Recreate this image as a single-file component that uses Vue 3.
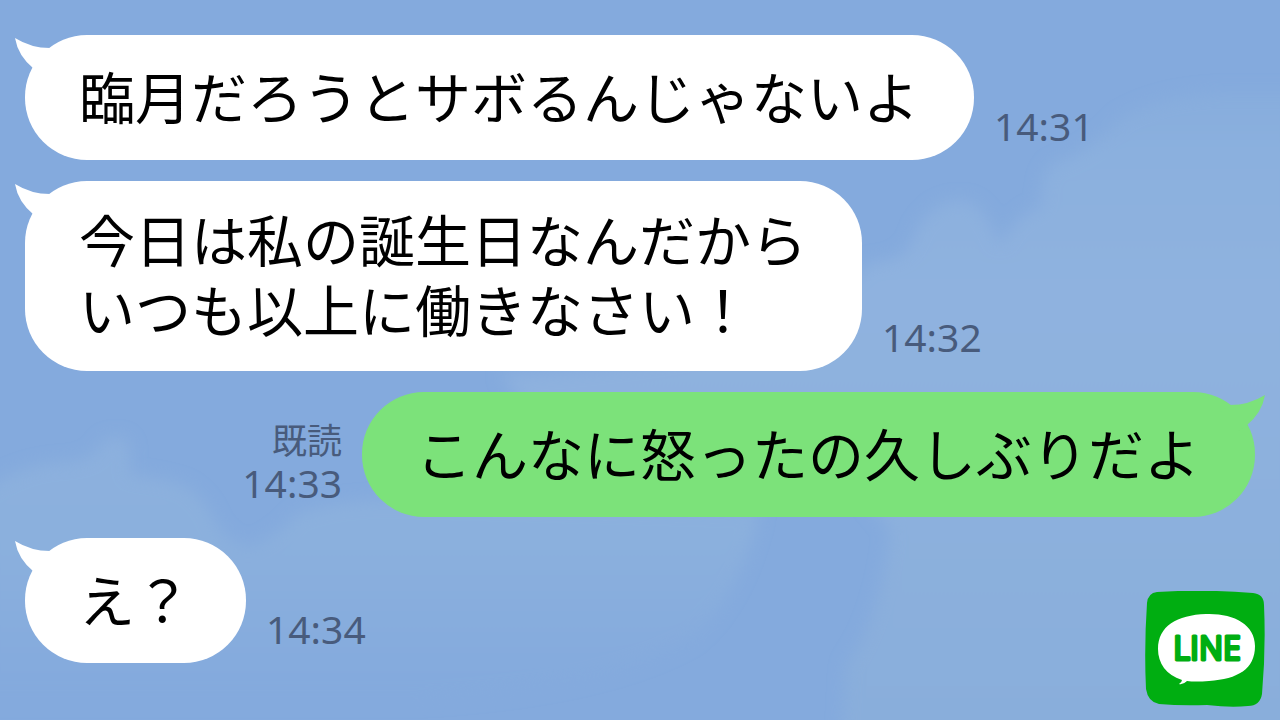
<script setup>
const messages = [
  { id: 1, mine: false, lines: ['臨月だろうとサボるんじゃないよ'], time: '14:31' },
  { id: 2, mine: false, lines: ['今日は私の誕生日なんだから', 'いつも以上に働きなさい！'], time: '14:32' },
  { id: 3, mine: true, lines: ['こんなに怒ったの久しぶりだよ'], time: '14:33', read: '既読' },
  { id: 4, mine: false, lines: ['え？'], time: '14:34' },
]
</script>

<template>
  <main class="chat">
    <svg class="sky" viewBox="0 0 1280 720" preserveAspectRatio="none" aria-hidden="true">
      <defs>
        <filter id="soft" x="-10%" y="-10%" width="120%" height="120%">
          <feGaussianBlur stdDeviation="8" />
        </filter>
        <linearGradient id="fadeLeft" x1="0" y1="440" x2="0" y2="680" gradientUnits="userSpaceOnUse">
          <stop offset="0" stop-color="#8cb0de" />
          <stop offset="0.4" stop-color="#8bb0dd" />
          <stop offset="1" stop-color="#84aadd" />
        </linearGradient>
        <linearGradient id="fadeRight" x1="0" y1="80" x2="0" y2="720" gradientUnits="userSpaceOnUse">
          <stop offset="0" stop-color="#86acdd" />
          <stop offset="0.12" stop-color="#8bb0de" />
          <stop offset="0.35" stop-color="#8fb2df" />
          <stop offset="1" stop-color="#89aedb" />
        </linearGradient>
      </defs>
      <path
        filter="url(#soft)"
        fill="url(#fadeRight)"
        d="M1300 92 L1220 92 Q1160 94 1120 118 Q1090 152 1052 164 Q1038 178 1042 206 Q1014 214 1000 246 Q986 204 964 200 Q934 198 916 230 Q910 262 870 262 L800 330 Q640 372 500 374 L560 450 L840 470 L890 530 Q880 620 846 665 L842 740 L1300 740 Z"
      />
      <path
        filter="url(#soft)"
        fill="url(#fadeLeft)"
        d="M-20 492 Q20 464 60 462 Q94 462 102 442 Q122 430 130 446 L130 474 Q166 478 186 486 Q208 500 216 524 Q232 546 252 546 Q280 534 296 514 Q340 498 400 500 L760 510 Q740 600 690 640 Q600 690 420 700 L-20 700 Z"
      />
    </svg>

    <ol class="messages">
      <li v-for="m in messages" :key="m.id" class="row" :class="{ mine: m.mine }">
        <div class="bubble">
          <svg class="tail" viewBox="0 0 48 40" aria-hidden="true">
            <path d="M0 3 Q16 13 35 13 L47 22 L28 40 L19 34 Q3 21 0 3 Z" />
          </svg>
          <p class="text">
            <span v-for="line in m.lines" :key="line" class="line">{{ line }}</span>
          </p>
        </div>
        <div class="meta">
          <span v-if="m.read" class="read">{{ m.read }}</span>
          <time class="time">{{ m.time }}</time>
        </div>
      </li>
    </ol>

    <svg class="logo" viewBox="0 0 120 116" role="img" aria-label="LINE">
      <path
        fill="#00ae11"
        d="M12 1 Q58 -2 108 2 Q119 3 119 14 Q121 58 117 103 Q115 115 103 115 Q86 117 62 114 Q36 115 14 113 Q3 111 1 98 Q-1 56 2 12 Q3 2 12 1 Z"
      />
      <path
        fill="#fff"
        d="M61 23 C88 22 110 33 110 55 C110 78 93 88 64 90 Q50 91 42 90 Q38 94 34 93 Q37 91 37 89 C21 84 13 72 13 58 C13 35 32 24 61 23 Z"
      />
      <text class="logo-text" x="62" y="69" text-anchor="middle">LINE</text>
    </svg>
  </main>
</template>

<style>
body {
  margin: 0;
  background: #84aadd;
}
</style>

<style scoped>
.chat {
  position: relative;
  min-height: 100vh;
  box-sizing: border-box;
  padding: 35px 25px;
  overflow: hidden;
  background: #84aadd;
  color: #000;
  font-family: "Liberation Sans", "Noto Sans CJK JP", sans-serif;
  font-kerning: none;
}

.sky {
  position: absolute;
  inset: 0;
  width: 100%;
  height: 100%;
}

.messages {
  position: relative;
  display: flex;
  flex-direction: column;
  gap: 21px;
  margin: 0;
  padding: 0;
  list-style: none;
}

.row {
  display: flex;
  align-items: flex-end;
  gap: 20px;
}

.row.mine {
  flex-direction: row-reverse;
}

.bubble {
  position: relative;
  display: flex;
  align-items: center;
  box-sizing: border-box;
  min-height: 125px;
  padding: 27px 55px 23px 54px;
  border-radius: 62px;
  background: #fff;
  color: #000;
}

.mine .bubble {
  background: #7ce27a;
}

.tail {
  position: absolute;
  top: 0;
  left: -10px;
  width: 48px;
  height: 40px;
  fill: #fff;
}

.mine .tail {
  right: -10px;
  left: auto;
  transform: scaleX(-1);
  fill: #7ce27a;
}

.text {
  margin: 0;
  font-size: 56px;
  line-height: 70px;
}

.line {
  display: block;
}

.meta {
  display: flex;
  flex-direction: column;
  align-items: flex-end;
  padding-bottom: 10px;
  color: #485b7c;
}

.read {
  font-size: 35px;
  line-height: 34px;
}

.time {
  font-family: "Noto Sans", sans-serif;
  font-size: 39px;
  line-height: 48px;
}

.logo {
  position: absolute;
  right: 15px;
  bottom: 13px;
  width: 120px;
  height: 116px;
}

.logo-text {
  fill: #00ae11;
  stroke: #00ae11;
  stroke-width: 3px;
  stroke-linejoin: round;
  font-family: "Open Sans", sans-serif;
  font-size: 32px;
  font-weight: 400;
}
</style>
